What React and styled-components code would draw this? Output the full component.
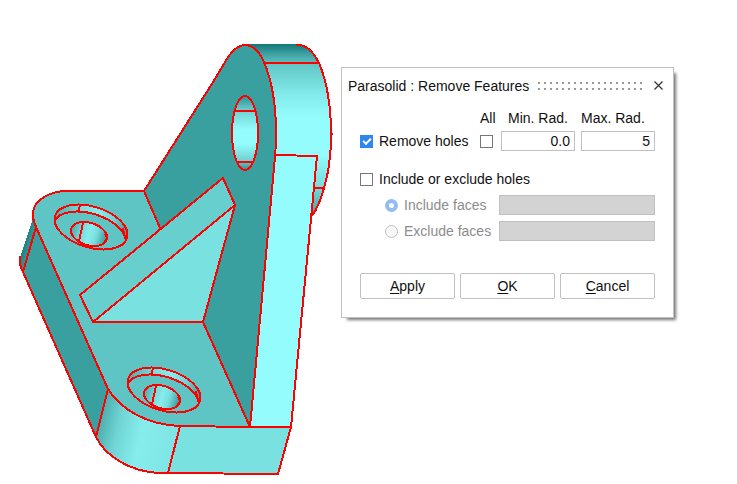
import { useState } from "react";
import styled, { createGlobalStyle } from "styled-components";

const GlobalStyle = createGlobalStyle`
  body {
    margin: 0;
    background: #fff;
    color: #111;
    font-family: "Liberation Sans", Arial, sans-serif;
    font-size: 14px;
    line-height: 20px;
  }
`;

const Workspace = styled.main`
  display: flex;
  align-items: flex-start;
`;

const Drawing = styled.svg`
  flex: none;
  display: block;
`;

const Dialog = styled.form`
  box-sizing: border-box;
  flex: 0 1 333px;
  margin-top: 67px;
  background: #fff;
  border: 1px solid #c0c0c0;
  box-shadow: 4px 4px 3px -2px #777;
`;

const TitleBar = styled.header`
  display: flex;
  align-items: center;
  height: 36px;
  padding: 0 9px 0 6px;
`;

const Title = styled.h1`
  margin: 0;
  font-size: 14px;
  font-weight: normal;
  white-space: nowrap;
`;

const Grip = styled.div`
  width: 104px;
  height: 8px;
  margin: 0 11px 0 auto;
  background: conic-gradient(from 270deg at 2px 2px, #999 90deg, transparent 0) 0 0 / 6px 6px;
`;

const CloseButton = styled.button`
  display: flex;
  padding: 0;
  border: none;
  background: none;
`;

const Body = styled.div`
  padding: 4px 18px 18px;
`;

const RadiusGrid = styled.div`
  display: grid;
  grid-template-columns: 1fr 15px 74px 74px;
  column-gap: 6px;
  row-gap: 3px;
  align-items: center;
`;

const Heading = styled.label`
  justify-self: ${(props) => props.$align || "start"};
  white-space: nowrap;
`;

const Choice = styled.label`
  display: flex;
  align-items: center;
  gap: 6px;
  color: ${(props) => (props.$disabled ? "#8c8c8c" : "inherit")};
  white-space: nowrap;
`;

const Checkbox = styled.input.attrs({ type: "checkbox" })`
  appearance: none;
  box-sizing: border-box;
  display: grid;
  place-items: center;
  flex: none;
  width: 13px;
  height: 13px;
  margin: 0;
  border: 1px solid #767676;
  background: #fff;

  &:checked {
    border-color: #2f86ee;
    background: #2f86ee;
  }

  &:checked::after {
    content: "";
    box-sizing: border-box;
    width: 8px;
    height: 5px;
    border: solid #fff;
    border-width: 0 0 2px 2px;
    transform: translateY(-1px) rotate(-45deg);
  }
`;

const Radio = styled.input.attrs({ type: "radio" })`
  appearance: none;
  box-sizing: border-box;
  flex: none;
  width: 13px;
  height: 13px;
  margin: 0;
  border: 1px solid #c0c0c0;
  border-radius: 50%;
  background: #f8f8f8;

  &:checked {
    border: 4px solid #93bdf0;
    background: #fff;
  }
`;

const Field = styled.input`
  box-sizing: border-box;
  width: 100%;
  height: 20px;
  padding: 0 4px;
  border: 1px solid #c0c0c0;
  border-radius: 0;
  background: #fff;
  color: #111;
  font: inherit;
  text-align: right;

  &:disabled {
    background: #d3d3d3;
  }
`;

const FilterGroup = styled.div`
  display: grid;
  gap: 6px;
  margin-top: 18px;
`;

const FilterRow = styled.div`
  display: grid;
  grid-template-columns: 1fr 156px;
  align-items: center;
  padding-left: 25px;
`;

const Actions = styled.footer`
  display: flex;
  gap: 5px;
  margin-top: 32px;
`;

const ActionButton = styled.button`
  flex: 1;
  height: 26px;
  padding: 0;
  border: 1px solid #c0c0c0;
  border-radius: 2px;
  background: #fff;
  color: #111;
  font: inherit;

  u {
    text-underline-offset: 2px;
    text-decoration-skip-ink: none;
  }
`;

// Counterbored hole, drawn around the upper one and shifted for the others
const Counterbore = ({ id, x = 0, y = 0 }) => (
  <g transform={`translate(${x} ${y})`}>
    <clipPath id={id}>
      <ellipse cx="91" cy="227" rx="37.6" ry="20.5" transform="rotate(17 91 227)" />
    </clipPath>
    <g clipPath={`url(#${id})`}>
      <rect x="50" y="200" width="80" height="52" fill="url(#bore)" stroke="none" />
      <ellipse cx="89.5" cy="234" rx="37.6" ry="20.5" transform="rotate(17 89.5 234)" fill="#5ec4c4" />
    </g>
    <ellipse cx="91" cy="227" rx="37.6" ry="20.5" transform="rotate(17 91 227)" fill="none" />
    <path d="M80 204L79 211M123 228L125 239" />
    <ellipse cx="89" cy="234" rx="18.5" ry="11.2" transform="rotate(17 89 234)" fill="url(#hole)" />
    <path d="M83 223L79 241M105 234L107 238L104 243" fill="none" />
  </g>
);

const Bracket = () => (
  <Drawing width="341" height="484" viewBox="0 0 341 484" role="img" aria-label="Bracket">
    <defs>
      <linearGradient id="rim" gradientUnits="userSpaceOnUse" x1="0" y1="44" x2="0" y2="216">
        <stop offset="0" stopColor="#127878" />
        <stop offset="0.05" stopColor="#3a9c9c" />
        <stop offset="0.12" stopColor="#62c6c6" />
        <stop offset="0.28" stopColor="#80e8e8" />
        <stop offset="0.42" stopColor="#94fcfc" />
        <stop offset="0.64" stopColor="#94fcfc" />
        <stop offset="0.84" stopColor="#76dada" />
        <stop offset="1" stopColor="#3c9c9c" />
      </linearGradient>
      <linearGradient id="eye" x1="0" y1="0" x2="0" y2="1">
        <stop offset="0" stopColor="#2d8f8f" />
        <stop offset="0.2" stopColor="#6fd2d2" />
        <stop offset="0.45" stopColor="#94fcfc" />
        <stop offset="0.65" stopColor="#94fcfc" />
        <stop offset="0.88" stopColor="#6ccfcf" />
        <stop offset="1" stopColor="#2d8f8f" />
      </linearGradient>
      <linearGradient id="corner" gradientUnits="userSpaceOnUse" x1="98" y1="425" x2="176" y2="443">
        <stop offset="0" stopColor="#4aadad" />
        <stop offset="0.25" stopColor="#70d4d4" />
        <stop offset="0.55" stopColor="#86ecec" />
        <stop offset="1" stopColor="#7ee4e4" />
      </linearGradient>
      <linearGradient id="side" gradientUnits="userSpaceOnUse" x1="23" y1="240" x2="34" y2="243">
        <stop offset="0" stopColor="#147878" />
        <stop offset="1" stopColor="#3ea4a4" />
      </linearGradient>
      <linearGradient id="bore">
        <stop offset="0.05" stopColor="#48aaaa" />
        <stop offset="0.4" stopColor="#7adede" />
        <stop offset="0.6" stopColor="#86ecec" />
        <stop offset="0.8" stopColor="#70d4d4" />
        <stop offset="1" stopColor="#2c9090" />
      </linearGradient>
      <linearGradient id="hole">
        <stop offset="0" stopColor="#4aacac" />
        <stop offset="0.3" stopColor="#78dcdc" />
        <stop offset="0.5" stopColor="#86ecec" />
        <stop offset="0.7" stopColor="#78dcdc" />
        <stop offset="1" stopColor="#329696" />
      </linearGradient>
    </defs>
    <g shapeRendering="crispEdges" stroke="#f00" strokeWidth="2" strokeLinejoin="round">
      {/* upright: rim, edge strip, front face */}
      <path
        stroke="none"
        fill="url(#rim)"
        d="M245 44H298C305 44 313 51 319 63C327 82 331 108 331 134C331 155 329 172 324 188C321 199 317 209 312 216L291 427H250Z"
      />
      <path fill="#94fcfc" stroke="none" d="M275 155L317 156L291 427L250 427Z" />
      <path
        fill="none"
        d="M296 45C305 44 313 51 319 63C327 82 331 108 331 134C331 155 329 172 324 188C321 199 317 209 312 216M264 63H319M275 155L317 156L291 427M314 188H324M331 134H333"
      />
      <path
        fill="#3a9f9f"
        d="M144 191L215 79L228 57C233 50 239 45 245 45C252 45 259 51 264 62C271 79 276 104 276 132Q276 150 274 168L250 427L203 322L160 228Z"
      />
      <ellipse cx="245" cy="133" rx="13" ry="37" fill="url(#eye)" />
      <path d="M235 111H256M237 162H253" />

      {/* base */}
      <path fill="url(#side)" stroke="none" d="M33 218L20 258Q19 265 23 272L37 228Z" />
      <path fill="#3a9f9f" d="M36 227L108 389L96 437L23 272Z" />
      <path fill="none" d="M20 256Q19 265 23 272" />
      <path
        fill="#5ec4c4"
        d="M63 191H144L160 228L203 322L250 427L180 426C148 425 121 410 108 389L36 227C31 216 32 208 38 202Q46 193 63 191Z"
      />
      <path fill="url(#corner)" d="M108 389C121 410 148 425 180 426L168 473H158C130 471 106 457 96 437Z" />
      <path fill="#7ae1e1" d="M180 426L250 427H291L278 474L168 473Z" />

      {/* rib */}
      <path fill="#68cfcf" d="M80 295L223 178L235 205L93 322Z" />
      <path fill="#7ae1e1" d="M235 205L203 322H93Z" />

      <Counterbore id="boreTop" />
      <Counterbore id="boreBottom" x={73} y={163} />
    </g>
  </Drawing>
);

const RemoveFeaturesDialog = () => {
  const [removeHoles, setRemoveHoles] = useState(true);
  const [filterHoles, setFilterHoles] = useState(false);

  return (
    <Dialog onSubmit={(e) => e.preventDefault()}>
      <TitleBar>
        <Title>Parasolid : Remove Features</Title>
        <Grip />
        <CloseButton type="button" aria-label="Close">
          <svg width="11" height="11" viewBox="0 0 11 11" stroke="#333" strokeWidth="1.2">
            <path d="M1.5 0.5L9.5 8.5M9.5 0.5L1.5 8.5" />
          </svg>
        </CloseButton>
      </TitleBar>
      <Body>
        <RadiusGrid>
          <span />
          <Heading htmlFor="all">All</Heading>
          <Heading htmlFor="min" $align="center">Min. Rad.</Heading>
          <Heading htmlFor="max">Max. Rad.</Heading>
          <Choice>
            <Checkbox checked={removeHoles} onChange={(e) => setRemoveHoles(e.target.checked)} />
            Remove holes
          </Choice>
          <Checkbox id="all" />
          <Field id="min" defaultValue="0.0" />
          <Field id="max" defaultValue="5" />
        </RadiusGrid>
        <FilterGroup>
          <Choice>
            <Checkbox checked={filterHoles} onChange={(e) => setFilterHoles(e.target.checked)} />
            Include or exclude holes
          </Choice>
          <FilterRow>
            <Choice $disabled={!filterHoles}>
              <Radio name="faces" defaultChecked disabled={!filterHoles} />
              Include faces
            </Choice>
            <Field aria-label="Include faces" disabled={!filterHoles} />
          </FilterRow>
          <FilterRow>
            <Choice $disabled={!filterHoles}>
              <Radio name="faces" disabled={!filterHoles} />
              Exclude faces
            </Choice>
            <Field aria-label="Exclude faces" disabled={!filterHoles} />
          </FilterRow>
        </FilterGroup>
        <Actions>
          <ActionButton type="button"><u>A</u>pply</ActionButton>
          <ActionButton type="submit"><u>O</u>K</ActionButton>
          <ActionButton type="button"><u>C</u>ancel</ActionButton>
        </Actions>
      </Body>
    </Dialog>
  );
};

const App = () => (
  <>
    <GlobalStyle />
    <Workspace>
      <Bracket />
      <RemoveFeaturesDialog />
    </Workspace>
  </>
);

export default App;
